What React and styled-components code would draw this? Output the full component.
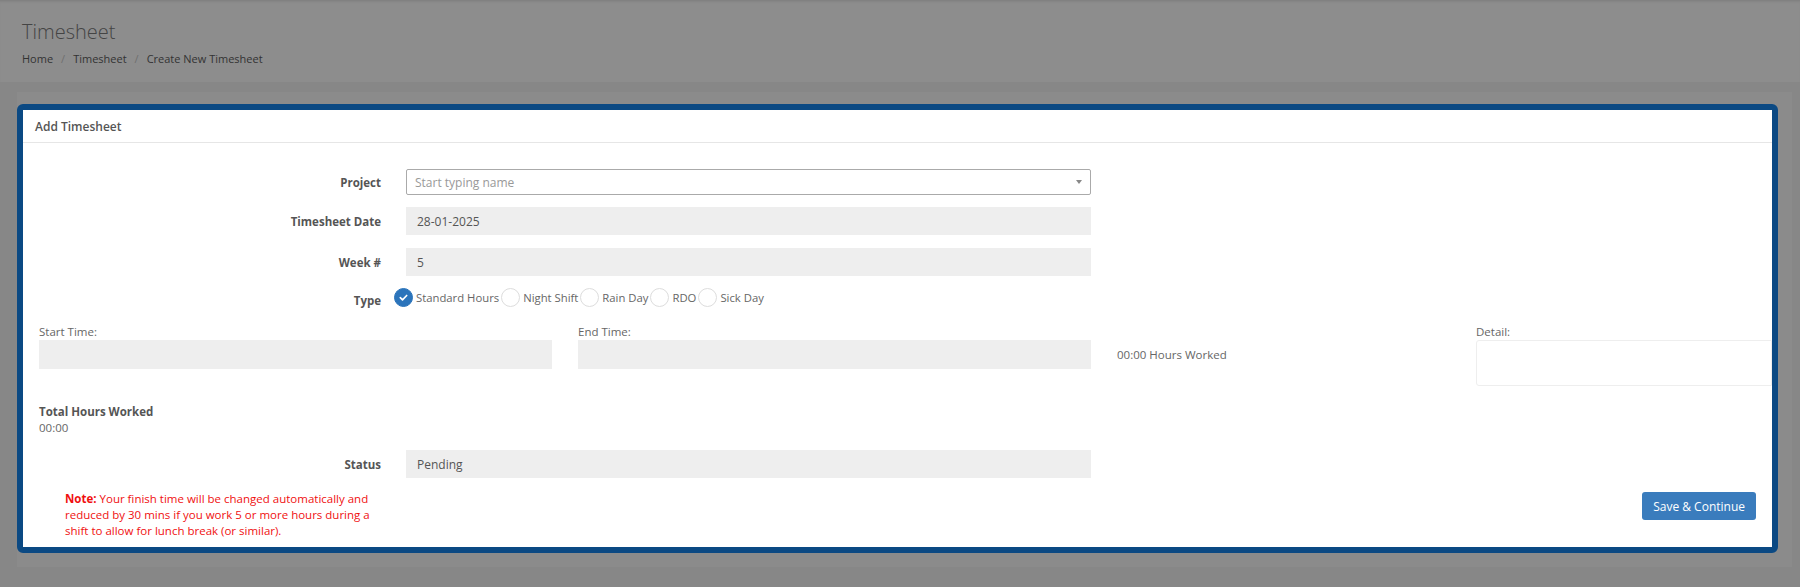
import React from "react";
import styled, { createGlobalStyle } from "styled-components";

const GlobalStyle = createGlobalStyle`
  html, body {
    margin: 0;
    padding: 0;
    background: #878787;
    font-family: "Open Sans", "Liberation Sans", sans-serif;
  }
  * { box-sizing: border-box; }
`;

const Page = styled.div`
  min-height: 587px;
  background: #878787;
  overflow: hidden;
`;

const Header = styled.header`
  height: 82px;
  background: #8d8d8d;
  padding: 20px 22px 0;
  box-shadow: inset 0 3px 3px -2px rgba(0, 0, 0, 0.12);
`;

const Title = styled.h1`
  margin: 0;
  font-size: 20px;
  line-height: 24px;
  font-weight: 300;
  color: #444;
`;

const Crumbs = styled.ol`
  display: flex;
  list-style: none;
  margin: 6px 0 0;
  padding: 0;
  font-size: 11px;
  line-height: 18px;
  color: #333;

  li + li::before {
    content: "/";
    color: #6f6f6f;
    padding: 0 8px;
  }
`;

const Panel = styled.section`
  margin: 10px 8px 0 17px;
  padding: 12px 14px 14px 0;
  background: #8b8b8b;
`;

const Card = styled.div`
  background: #fff;
  border: 6px solid #0b4983;
  border-radius: 6px;
  overflow: hidden;
`;

const CardHead = styled.div`
  height: 33px;
  padding: 0 12px;
  display: flex;
  align-items: center;
  border-bottom: 1px solid #e6e6e6;
  font-size: 12px;
  font-weight: 600;
  color: #555;
`;

const CardBody = styled.div`
  padding: 26px 16px 8px;
`;

const FormRow = styled.div`
  display: grid;
  grid-template-columns: 342px 685px;
  column-gap: 25px;
  align-items: center;
  margin-bottom: ${(p) => p.$mb || 0}px;
`;

const Label = styled.label`
  text-align: right;
  font-size: 11.5px;
  font-weight: 700;
  color: #555;
  padding-top: ${(p) => p.$down || 0}px;
`;

const Field = styled.div`
  height: ${(p) => p.$h || 28}px;
  background: #eee;
  padding: 0 11px;
  display: flex;
  align-items: center;
  font-size: 12px;
  color: #555;
`;

const Select = styled.div`
  height: 26px;
  background: #fff;
  border: 1px solid #aaa;
  border-radius: 2px;
  padding: 0 8px;
  display: flex;
  align-items: center;
  justify-content: space-between;
  font-size: 12px;
  color: #999;
`;

const Caret = styled.span`
  width: 0;
  height: 0;
  border-left: 3px solid transparent;
  border-right: 3px solid transparent;
  border-top: 4px solid #888;
`;

const Radios = styled.div`
  display: flex;
  align-items: center;
  height: 20px;
  margin-left: -12px;
`;

const RadioItem = styled.span`
  display: flex;
  align-items: center;
  gap: 3px;
  margin-right: 2px;
  font-size: 11.3px;
  color: #666;
`;

const Circle = styled.span`
  width: 19px;
  height: 19px;
  border-radius: 50%;
  display: flex;
  align-items: center;
  justify-content: center;
  background: ${(p) => (p.$on ? "#2b74bb" : "#fff")};
  border: 1px solid ${(p) => (p.$on ? "#2b74bb" : "#ddd")};
`;

const TimeGrid = styled.div`
  display: grid;
  grid-template-columns: 513px 513px 333px 1fr;
  column-gap: 26px;
  margin: 16px -16px 0 0;
  align-items: start;
`;

const Cell = styled.div`
  display: flex;
  flex-direction: column;
`;

const SmallLabel = styled.div`
  font-size: 11.5px;
  line-height: 16px;
  color: #666;
`;

const Box = styled.div`
  height: ${(p) => p.$h || 29}px;
  background: ${(p) => (p.$plain ? "#fff" : "#eee")};
  border: ${(p) => (p.$plain ? "1px solid #eee" : "none")};
  border-radius: ${(p) => (p.$plain ? "3px 0 0 3px" : "0")};
`;

const Worked = styled.div`
  padding-top: 16px;
  line-height: 29px;
  font-size: 11.5px;
  color: #666;
`;

const Total = styled.div`
  margin: 18px 0 14px;
  line-height: 16px;
  font-size: 11.5px;
  color: #666;

  strong {
    display: block;
    font-weight: 700;
    color: #555;
  }
`;

const Footer = styled.div`
  display: flex;
  justify-content: space-between;
  align-items: flex-start;
  margin-top: 13px;
`;

const Note = styled.p`
  margin: 0 0 0 26px;
  font-size: 11.5px;
  line-height: 16px;
  color: #f01010;

  b {
    font-weight: 700;
  }
`;

const SaveButton = styled.button`
  margin-top: 1px;
  height: 28px;
  padding: 0 11px;
  border: none;
  border-radius: 3px;
  background: #3a7cbd;
  color: #fff;
  font-family: inherit;
  font-size: 12px;
`;

const Check = () => (
  <svg width="11" height="11" viewBox="0 0 12 12">
    <path d="M2.5 6.2l2.4 2.4 4.6-4.8" fill="none" stroke="#fff" strokeWidth="1.8" strokeLinecap="round" strokeLinejoin="round" />
  </svg>
);

const types = ["Standard Hours", "Night Shift", "Rain Day", "RDO", "Sick Day"];

export default function App() {
  return (
    <Page>
      <GlobalStyle />
      <Header>
        <Title>Timesheet</Title>
        <Crumbs>
          <li>Home</li>
          <li>Timesheet</li>
          <li>Create New Timesheet</li>
        </Crumbs>
      </Header>
      <Panel>
        <Card>
          <CardHead>Add Timesheet</CardHead>
          <CardBody>
            <FormRow $mb={12}>
              <Label>Project</Label>
              <Select>
                Start typing name
                <Caret />
              </Select>
            </FormRow>
            <FormRow $mb={13}>
              <Label>Timesheet Date</Label>
              <Field>28-01-2025</Field>
            </FormRow>
            <FormRow $mb={11}>
              <Label>Week #</Label>
              <Field>5</Field>
            </FormRow>
            <FormRow>
              <Label $down={6}>Type</Label>
              <Radios>
                {types.map((t, i) => (
                  <RadioItem key={t}>
                    <Circle $on={i === 0}>{i === 0 && <Check />}</Circle>
                    {t}
                  </RadioItem>
                ))}
              </Radios>
            </FormRow>

            <TimeGrid>
              <Cell>
                <SmallLabel>Start Time:</SmallLabel>
                <Box />
              </Cell>
              <Cell>
                <SmallLabel>End Time:</SmallLabel>
                <Box />
              </Cell>
              <Worked>00:00 Hours Worked</Worked>
              <Cell>
                <SmallLabel>Detail:</SmallLabel>
                <Box $plain $h={46} />
              </Cell>
            </TimeGrid>

            <Total>
              <strong>Total Hours Worked</strong>
              00:00
            </Total>

            <FormRow>
              <Label>Status</Label>
              <Field $h={28}>Pending</Field>
            </FormRow>

            <Footer>
              <Note>
                <b>Note:</b> Your finish time will be changed automatically and
                <br />
                reduced by 30 mins if you work 5 or more hours during a
                <br />
                shift to allow for lunch break (or similar).
              </Note>
              <SaveButton>Save &amp; Continue</SaveButton>
            </Footer>
          </CardBody>
        </Card>
      </Panel>
    </Page>
  );
}
